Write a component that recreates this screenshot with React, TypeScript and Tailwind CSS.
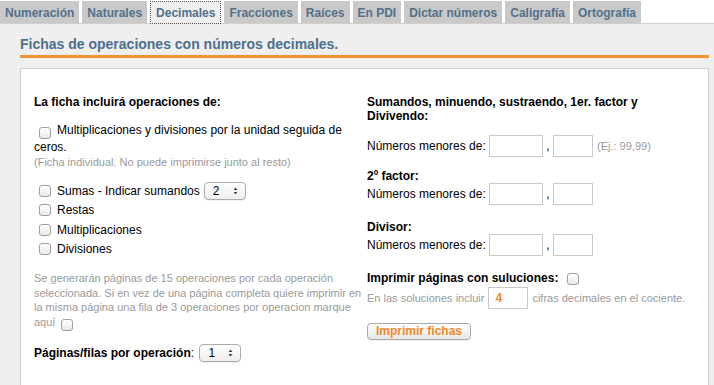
import React from "react";

const tabs = ["Numeración", "Naturales", "Decimales", "Fracciones", "Raíces", "En PDI", "Dictar números", "Caligrafía", "Ortografía"];

function CB() {
  return (
    <span className="inline-block w-[12px] h-[12px] shrink-0 rounded-[3px] border border-[#9f9f9f] bg-linear-to-b from-white to-[#e9e9e9] align-middle" />
  );
}

function Sel({ v, w = 42 }: { v: string; w?: number }) {
  return (
    <span
      className="inline-flex items-center justify-between h-[18px] rounded-[4px] border border-[#ababab] bg-linear-to-b from-white to-[#eeeeee] pl-[8px] pr-[7px] text-[12px] text-black font-normal shadow-[0_1px_0_rgba(0,0,0,0.05)]"
      style={{ width: w }}
    >
      <span>{v}</span>
      <svg width="5" height="8" viewBox="0 0 5 8">
        <path d="M2.5 0.5 L4.5 3 H0.5 Z M2.5 7.5 L0.5 5 H4.5 Z" fill="#444" />
      </svg>
    </span>
  );
}

function Inp({ w, v }: { w: number; v?: string }) {
  return (
    <span
      className="inline-flex items-center h-[22px] border border-[#c9c9c9] bg-white pl-[6px] text-[12px] font-bold text-[#f0892a]"
      style={{ width: w }}
    >
      {v}
    </span>
  );
}

function NumRow() {
  return (
    <div className="flex items-center h-[22px] text-[12px] text-black">
      <span className="w-[122px]">Números menores de:</span>
      <Inp w={54} />
      <span className="w-[10px] text-center">,</span>
      <Inp w={40} />
    </div>
  );
}

export default function App() {
  return (
    <div className="w-[714px] h-[385px] overflow-hidden bg-white font-['Liberation_Sans',Arial,sans-serif]">
      <div className="flex pt-[1px] h-[23px] relative z-10">
        {tabs.map((t) => (
          <div
            key={t}
            className={
              "mr-[3px] h-[22px] px-[5px] pt-[1px] flex items-center text-[12px] font-bold text-[#52708a] " +
              (t === "Decimales"
                ? "bg-[#efefef] border border-dotted border-[#555] h-[23px]"
                : "bg-[#c9c9c9]")
            }
          >
            {t}
          </div>
        ))}
      </div>
      <div className="bg-[#efefef] border-t border-[#cfcfcf] pl-[20px] pr-[5px] pt-[12px] h-[362px]">
        <div className="text-[14px] leading-[17px] font-bold text-[#4d6f8b] pb-[2px] border-b-[3px] border-[#f29331]">
          Fichas de operaciones con números decimales.
        </div>
        <div className="mt-[10px] bg-white border border-[#cfcfcf] h-[320px] pt-[26px] pl-[13px] grid grid-cols-[333px_1fr]">
          {/* Left column */}
          <div className="flex flex-col text-[12px] text-black">
            <div className="font-bold leading-[14px]">La ficha incluirá operaciones de:</div>
            <div className="mt-[14px] leading-[15px]">
              <span className="inline-block w-[5px]" />
              <span className="inline-block align-[-2px] mr-[6px]">
                <CB />
              </span>
              Multiplicaciones y divisiones por la unidad seguida de ceros.
            </div>
            <div className="text-[11px] leading-[14px] text-[#9a9a9a]">
              (Ficha individual. No puede imprimirse junto al resto)
            </div>
            <div className="mt-[12px] flex flex-col pl-[5px]">
              <div className="h-[19.5px] flex items-center gap-[6px]">
                <CB />
                <span>Sumas - Indicar sumandos</span>
                <span className="-ml-[2px]">
                  <Sel v="2" />
                </span>
              </div>
              <div className="h-[19.5px] flex items-center gap-[6px]">
                <CB />
                <span>Restas</span>
              </div>
              <div className="h-[19.5px] flex items-center gap-[6px]">
                <CB />
                <span>Multiplicaciones</span>
              </div>
              <div className="h-[19.5px] flex items-center gap-[6px]">
                <CB />
                <span>Divisiones</span>
              </div>
            </div>
            <div className="mt-[12px] text-[11px] leading-[14.7px] text-[#9a9a9a] pr-[4px]">
              Se generarán páginas de 15 operaciones por cada operación seleccionada. Si en vez de una página completa quiere imprimir en la misma página una fila de 3 operaciones por operacion marque aquí{" "}
              <span className="inline-block align-[-2px] ml-[3px]">
                <CB />
              </span>
            </div>
            <div className="mt-[12px] flex items-center h-[18px]">
              <span className="font-bold">Páginas/filas por operación</span>
              <span>:&nbsp;</span>
              <span className="ml-[2px]">
                <Sel v="1" />
              </span>
            </div>
          </div>
          {/* Right column */}
          <div className="flex flex-col text-[12px] text-black">
            <div className="font-bold leading-[14px]">
              Sumandos, minuendo, sustraendo, 1er. factor y
              <br />
              Divivendo:
            </div>
            <div className="mt-[12px] flex items-center">
              <NumRow />
              <span className="ml-[4px] text-[11px] text-[#9a9a9a]">(Ej.: 99,99)</span>
            </div>
            <div className="mt-[13px] font-bold leading-[13px]">2º factor:</div>
            <div className="mt-[0px]">
              <NumRow />
            </div>
            <div className="mt-[16px] font-bold leading-[13px]">Divisor:</div>
            <div className="mt-[0px]">
              <NumRow />
            </div>
            <div className="mt-[15px] flex items-center h-[14px]">
              <span className="font-bold">Imprimir páginas con suluciones:</span>
              <span className="ml-[9px]">
                <CB />
              </span>
            </div>
            <div className="mt-[2px] flex items-center text-[11px] text-[#9a9a9a]">
              <span className="mr-[4px]">En las soluciones incluir</span>
              <Inp w={40} v="4" />
              <span className="ml-[4px]">cifras decimales en el cociente.</span>
            </div>
            <div className="mt-[13px]">
              <span className="inline-flex items-center justify-center w-[104px] h-[17px] rounded-[4px] border border-[#a8a8a8] bg-linear-to-b from-white to-[#e6e6e6] text-[12px] font-bold text-[#f0892a] shadow-[0_1px_0_rgba(0,0,0,0.06)]">
                Imprimir fichas
              </span>
            </div>
          </div>
        </div>
      </div>
    </div>
  );
}
